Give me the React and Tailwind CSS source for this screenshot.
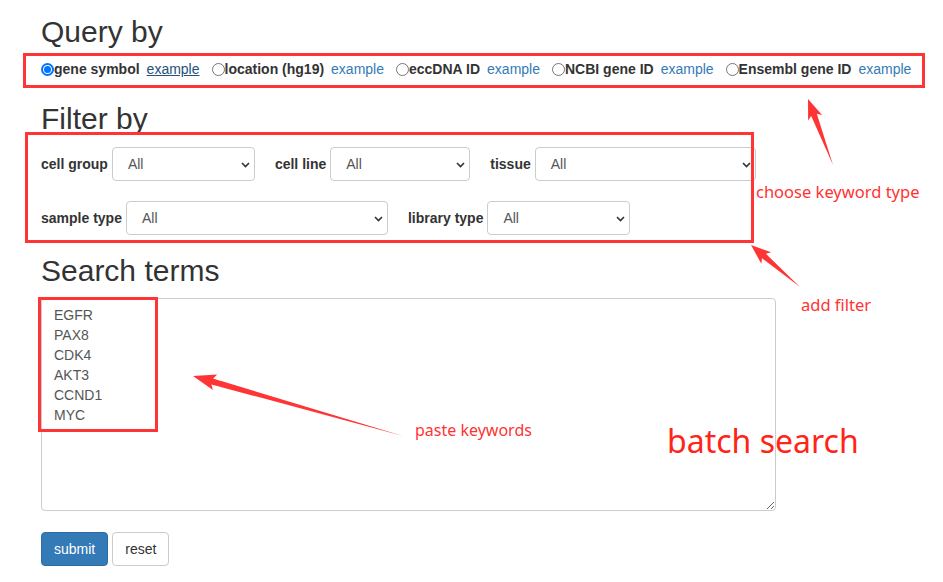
import React from 'react';

const RED = '#ff3535';

const arrowPoints = (x1, y1, x2, y2, head = 17, headW = 15, shaft = 6) => {
  const dx = x2 - x1;
  const dy = y2 - y1;
  const len = Math.hypot(dx, dy);
  const ux = dx / len;
  const uy = dy / len;
  const nx = -uy;
  const ny = ux;
  const bx = x2 - ux * head;
  const by = y2 - uy * head;
  const wx = bx - ux * 3;
  const wy = by - uy * 3;
  const pts = [
    [x1, y1],
    [bx + (nx * shaft) / 2, by + (ny * shaft) / 2],
    [wx + (nx * headW) / 2, wy + (ny * headW) / 2],
    [x2, y2],
    [wx - (nx * headW) / 2, wy - (ny * headW) / 2],
    [bx - (nx * shaft) / 2, by - (ny * shaft) / 2],
  ];
  return pts.map((p) => p.map((v) => v.toFixed(1)).join(',')).join(' ');
};

const Radio = ({ checked }) =>
  checked ? (
    <span className="w-[13px] h-[13px] rounded-full border-2 border-[#0075ff] flex items-center justify-center shrink-0">
      <span className="w-[7px] h-[7px] rounded-full bg-[#0075ff]" />
    </span>
  ) : (
    <span className="w-[13px] h-[13px] rounded-full border border-[#767676] bg-white shrink-0" />
  );

const QueryOption = ({ label, checked, first, active }) => (
  <div className={`flex items-center ${first ? '' : 'ml-[12px]'}`}>
    <Radio checked={checked} />
    <span className="font-bold text-[#333]">{label}</span>
    <a
      className={`ml-[7px] ${active ? 'text-[#23527c] underline' : 'text-[#337ab7]'}`}
    >
      example
    </a>
  </div>
);

const Select = ({ width }) => (
  <div
    className={`h-[34px] ${width} flex items-center justify-between bg-white border border-[#ccc] rounded-[4px] pl-[15px] pr-[4px] text-[#555]`}
  >
    <span>All</span>
    <svg width="9" height="6" viewBox="0 0 9 6" className="mt-[1px]">
      <path d="M1 1 L4.5 4.5 L8 1" fill="none" stroke="#333" strokeWidth="1.6" />
    </svg>
  </div>
);

const Field = ({ label, width, first }) => (
  <div className={`flex items-center gap-[4px] ${first ? '' : 'ml-[20px]'}`}>
    <label className="font-bold text-[#333] pb-[1px]">{label}</label>
    <Select width={width} />
  </div>
);

const queryOptions = [
  { label: 'gene symbol', checked: true, active: true },
  { label: 'location (hg19)' },
  { label: 'eccDNA ID' },
  { label: 'NCBI gene ID' },
  { label: 'Ensembl gene ID' },
];

const terms = ['EGFR', 'PAX8', 'CDK4', 'AKT3', 'CCND1', 'MYC'];

export default function App() {
  return (
    <div className="relative w-[943px] h-[582px] overflow-hidden bg-white font-['Liberation_Sans',Arial,sans-serif] text-[14px] leading-[20px] text-[#333]">
      <div className="pl-[41px] pt-[15px]">
        <h2 className="text-[30px] leading-[33px] font-medium">Query by</h2>

        <div className="mt-[11px] h-[20px] flex items-center">
          {queryOptions.map((o, i) => (
            <QueryOption key={o.label} {...o} first={i === 0} />
          ))}
        </div>

        <h2 className="mt-[23px] text-[30px] leading-[33px] font-medium">Filter by</h2>

        <div className="mt-[12px] flex items-center">
          <Field label="cell group" width="w-[143px]" first />
          <Field label="cell line" width="w-[140px]" />
          <Field label="tissue" width="w-[221px]" />
        </div>
        <div className="mt-[20px] flex items-center">
          <Field label="sample type" width="w-[262px]" first />
          <Field label="library type" width="w-[143px]" />
        </div>

        <h2 className="mt-[19px] text-[30px] leading-[33px] font-medium">Search terms</h2>

        <textarea
          className="block mt-[11px] w-[735px] h-[213px] border border-[#ccc] rounded-[4px] px-[12px] py-[6px] text-[14px] leading-[20px] text-[#555] outline-none"
          defaultValue={terms.join('\n')}
        />

        <div className="mt-[21px] flex gap-[4px]">
          <button className="h-[34px] px-[12px] rounded-[4px] bg-[#337ab7] border border-[#2e6da4] text-white">
            submit
          </button>
          <button className="h-[34px] px-[12px] rounded-[4px] bg-white border border-[#ccc] text-[#333]">
            reset
          </button>
        </div>
      </div>

      {/* annotation layer */}
      <div className="absolute left-[23px] top-[53px] w-[902px] h-[35px] border-[3px] border-[#ff3535] pointer-events-none" />
      <div className="absolute left-[25px] top-[132px] w-[729px] h-[111px] border-[3px] border-[#ff3535] pointer-events-none" />
      <div className="absolute left-[38px] top-[297px] w-[120px] h-[135px] border-[3px] border-[#ff3535] pointer-events-none" />

      <svg className="absolute inset-0 pointer-events-none" width="943" height="582">
        <polygon points={arrowPoints(833, 165, 808, 99)} fill={RED} />
        <polygon points={arrowPoints(800, 287, 751, 245)} fill={RED} />
        <polygon points={arrowPoints(403, 436, 193, 376, 20, 16, 6)} fill={RED} />
      </svg>

      <div className="absolute left-[756px] top-[180px] font-['Noto_Sans',sans-serif] text-[16.5px] leading-[24px] text-[#f33]">
        choose keyword type
      </div>
      <div className="absolute left-[801px] top-[293px] font-['Noto_Sans',sans-serif] text-[16.5px] leading-[24px] text-[#f33]">
        add filter
      </div>
      <div className="absolute left-[415px] top-[418px] font-['Noto_Sans',sans-serif] text-[16px] leading-[24px] text-[#f33]">
        paste keywords
      </div>
      <div className="absolute left-[667px] top-[419px] font-['Noto_Sans',sans-serif] text-[32px] leading-[44px] text-[#ff2418]">
        batch search
      </div>
    </div>
  );
}
